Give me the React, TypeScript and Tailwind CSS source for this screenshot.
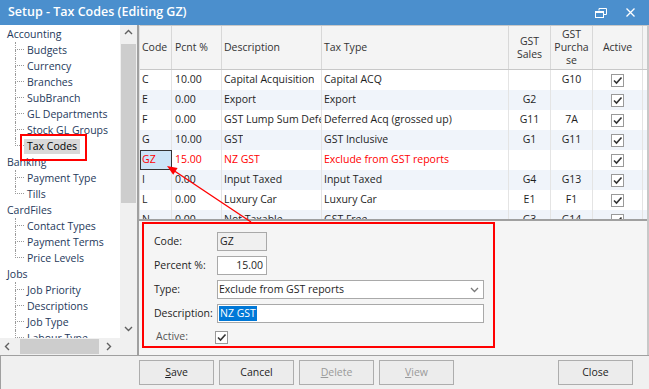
import React from "react";

const tree = [
  { name: "Accounting", children: ["Budgets", "Currency", "Branches", "SubBranch", "GL Departments", "Stock GL Groups", "Tax Codes"] },
  { name: "Banking", children: ["Payment Type", "Tills"] },
  { name: "CardFiles", children: ["Contact Types", "Payment Terms", "Price Levels"] },
  { name: "Jobs", children: ["Job Priority", "Descriptions", "Job Type", "Labour Type", "Status"] },
];

const rows = [
  ["C", "10.00", "Capital Acquisition", "Capital ACQ", "", "G10"],
  ["E", "0.00", "Export", "Export", "G2", ""],
  ["F", "0.00", "GST Lump Sum Deferred", "Deferred Acq (grossed up)", "G11", "7A"],
  ["G", "10.00", "GST", "GST Inclusive", "G1", "G11"],
  ["GZ", "15.00", "NZ GST", "Exclude from GST reports", "", ""],
  ["I", "0.00", "Input Taxed", "Input Taxed", "G4", "G13"],
  ["L", "0.00", "Luxury Car", "Luxury Car", "E1", "F1"],
  ["N", "0.00", "Not Taxable", "GST Free", "G3", "G14"],
];

function Check({ className = "" }: { className?: string }) {
  return (
    <div className={"w-[13px] h-[13px] border border-[#9a9a9a] bg-white flex items-center justify-center " + className}>
      <svg width="11" height="11" viewBox="0 0 11 11">
        <path d="M2 5.5 L4.5 8 L9.5 2.5" fill="none" stroke="#333" strokeWidth="1.6" />
      </svg>
    </div>
  );
}

function Chevron({ dir }: { dir: "up" | "down" | "left" | "right" }) {
  const d =
    dir === "up" ? "M1 5 L4.5 1.5 L8 5" : dir === "down" ? "M1 2 L4.5 5.5 L8 2" : dir === "left" ? "M5 1 L1.5 4.5 L5 8" : "M2 1 L5.5 4.5 L2 8";
  return (
    <svg width="9" height="9" viewBox="0 0 9 9">
      <path d={d} fill="none" stroke="#606060" strokeWidth="1.4" />
    </svg>
  );
}

function Tree() {
  return (
    <div className="pl-[7px] pt-[1px] text-[#1e395b] leading-[16px]">
      {tree.map((g) => (
        <div key={g.name}>
          <div className="h-[16px] flex items-center whitespace-nowrap">{g.name}</div>
          <div className="ml-[8px]">
            {g.children.map((c, i) => {
              const last = i === g.children.length - 1;
              const sel = c === "Tax Codes";
              return (
                <div key={c} className="h-[16px] flex items-stretch whitespace-nowrap">
                  <div className="w-[9px] flex flex-col shrink-0">
                    <div className="h-[8px] border-l border-b border-dotted border-[#9a9a9a]" />
                    {!last && <div className="flex-1 border-l border-dotted border-[#9a9a9a]" />}
                  </div>
                  <div className="flex items-center">
                    <span className={sel ? "bg-[#d9d9d9] text-black px-[3px] h-[15px] flex items-center" : "px-[3px]"}>{c}</span>
                  </div>
                </div>
              );
            })}
          </div>
        </div>
      ))}
    </div>
  );
}

const colW = ["w-[32px]", "w-[50px]", "w-[100px]", "w-[187px]", "w-[42px]", "w-[42px]", "w-[50px]"];

function Grid() {
  return (
    <div className="h-[194px] overflow-hidden bg-white border-l border-[#e0e0e0]">
      <div className="h-[45px] flex bg-[#f4f4f4] border-t border-b border-[#c8c8c8] text-[#333]">
        <div className={colW[0] + " border-r border-[#d8d8d8] flex items-center pl-[2px]"}>Code</div>
        <div className={colW[1] + " border-r border-[#d8d8d8] flex items-center pl-[3px]"}>Pcnt %</div>
        <div className={colW[2] + " border-r border-[#d8d8d8] flex items-center pl-[2px]"}>Description</div>
        <div className={colW[3] + " border-r border-[#d8d8d8] flex items-center pl-[2px]"}>Tax Type</div>
        <div className={colW[4] + " border-r border-[#d8d8d8] flex items-center justify-center text-center leading-[13px]"}>GST<br />Sales</div>
        <div className={colW[5] + " border-r border-[#d8d8d8] flex items-center justify-center text-center leading-[13px]"}>GST<br />Purcha<br />se</div>
        <div className={colW[6] + " border-r border-[#d8d8d8] flex items-center justify-center"}>Active</div>
        <div className="flex-1" />
      </div>
      {rows.map((r, i) => {
        const sel = r[0] === "GZ";
        const bg = i % 2 === 1 ? "bg-[#f0f4fa]" : "bg-white";
        const tc = sel ? "text-[#ff0000]" : "text-[#1e1e1e]";
        return (
          <div key={r[0]} className={"h-[20px] flex " + bg + " " + tc}>
            <div
              className={
                colW[0] +
                " flex items-center " +
                (sel ? "bg-[#cce4f7] border border-[#333333] pl-[1px]" : "border-r border-[#e4e4e4] pl-[2px]")
              }
            >
              {r[0]}
            </div>
            <div className={colW[1] + " border-r border-[#e4e4e4] flex items-center pl-[3px]"}>{r[1]}</div>
            <div className={colW[2] + " border-r border-[#e4e4e4] flex items-center pl-[2px] overflow-hidden"}>
              <span className="whitespace-nowrap overflow-hidden">{r[2]}</span>
            </div>
            <div className={colW[3] + " border-r border-[#e4e4e4] flex items-center pl-[2px] overflow-hidden"}>
              <span className="whitespace-nowrap overflow-hidden">{r[3]}</span>
            </div>
            <div className={colW[4] + " border-r border-[#e4e4e4] flex items-center justify-center"}>{r[4]}</div>
            <div className={colW[5] + " border-r border-[#e4e4e4] flex items-center justify-center"}>{r[5]}</div>
            <div className={colW[6] + " border-r border-[#e4e4e4] flex items-center justify-center"}>
              <Check />
            </div>
            <div className="flex-1" />
          </div>
        );
      })}
    </div>
  );
}

function Form() {
  return (
    <div className="flex-1 bg-[#f5f5f5] pl-[3px] pt-[1px]">
      <div className="w-[353px] h-[126px] border-2 border-[#ff0000] pl-[10px] pt-[8px] flex flex-col gap-[5px] text-[#1e1e1e]">
        <div className="h-[19px] flex items-center">
          <div className="w-[63px]">Code:</div>
          <div className="w-[50px] h-[19px] border border-[#a9a9a9] bg-[#f0f0f0] flex items-center pl-[2px]">GZ</div>
        </div>
        <div className="h-[19px] flex items-center">
          <div className="w-[63px]">Percent %:</div>
          <div className="w-[50px] h-[19px] border border-[#a9a9a9] bg-white flex items-center justify-end pr-[3px]">15.00</div>
        </div>
        <div className="h-[19px] flex items-center">
          <div className="w-[63px]">Type:</div>
          <div className="w-[267px] h-[19px] border border-[#a9a9a9] bg-white flex items-center pl-[1px] pr-[4px]">
            <span>Exclude from GST reports</span>
            <span className="ml-auto">
              <svg width="9" height="9" viewBox="0 0 9 9">
                <path d="M1 3 L4.5 6.5 L8 3" fill="none" stroke="#7a7a7a" strokeWidth="1.3" />
              </svg>
            </span>
          </div>
        </div>
        <div className="h-[19px] flex items-center">
          <div className="w-[63px]">Description:</div>
          <div className="w-[267px] h-[19px] border border-[#a9a9a9] bg-white flex items-center pl-[1px]">
            <span className="bg-[#0078d7] text-white px-[1px] leading-[15px]">NZ GST</span>
          </div>
        </div>
        <div className="h-[19px] flex items-center">
          <div className="w-[61px] pl-[2px] text-[#555]">Active:</div>
          <Check className="bg-[#f5f5f5]" />
        </div>
      </div>
    </div>
  );
}

function Btn({ children, disabled = false, ml = "" }: { children: React.ReactNode; disabled?: boolean; ml?: string }) {
  return (
    <div
      className={
        "w-[75px] h-[25px] border border-[#adadad] bg-[#ececec] flex items-center justify-center " +
        (disabled ? "text-[#9a9a9a] " : "text-[#1e1e1e] ") +
        ml
      }
    >
      {children}
    </div>
  );
}

export default function App() {
  return (
    <div className="relative w-[649px] h-[389px] overflow-hidden bg-[#f0f0f0] font-['Open_Sans',sans-serif] text-[10.5px] text-[#1e1e1e] flex flex-col">
      <div className="h-[25px] shrink-0 bg-[#4b8fcd] flex items-center pl-[8px] pr-[14px]">
        <span className="text-white font-semibold text-[12.5px] leading-none">Setup - Tax Codes (Editing GZ)</span>
        <div className="ml-auto flex items-center gap-[19px]">
          <svg width="12" height="10" viewBox="0 0 12 10">
            <path d="M4 2.5 V0.5 H11.5 V6.5 H9" fill="none" stroke="white" strokeWidth="1" />
            <rect x="0.5" y="3.5" width="8" height="6" fill="none" stroke="white" strokeWidth="1" />
            <line x1="0.5" y1="4.5" x2="8.5" y2="4.5" stroke="white" strokeWidth="1" />
          </svg>
          <svg width="9" height="9" viewBox="0 0 9 9">
            <path d="M0.5 0.5 L8.5 8.5 M8.5 0.5 L0.5 8.5" stroke="white" strokeWidth="1.3" />
          </svg>
        </div>
      </div>

      <div className="h-[330px] shrink-0 flex">
        <div className="w-[137px] flex flex-col bg-white">
          <div className="flex-1 flex min-h-0">
            <div className="flex-1 overflow-hidden">
              <Tree />
            </div>
            <div className="w-[17px] bg-[#f0f0f0] flex flex-col">
              <div className="h-[17px] flex items-center justify-center">
                <Chevron dir="up" />
              </div>
              <div className="mt-[2px] h-[159px] mx-[1px] bg-[#cdcdcd]" />
              <div className="flex-1" />
              <div className="h-[17px] flex items-center justify-center">
                <Chevron dir="down" />
              </div>
            </div>
          </div>
          <div className="h-[17px] flex bg-[#f0f0f0]">
            <div className="w-[120px] flex items-center">
              <div className="w-[17px] flex justify-center">
                <Chevron dir="left" />
              </div>
              <div className="ml-[3px] w-[79px] h-[15px] bg-[#cdcdcd]" />
              <div className="flex-1 flex justify-center">
                <Chevron dir="right" />
              </div>
            </div>
            <div className="flex-1" />
          </div>
        </div>
        <div className="w-[2px] bg-[#a0a0a0]" />
        <div className="flex-1 flex flex-col border-r-2 border-[#c8c8c8]">
          <Grid />
          <div className="h-[2px] bg-[#a0a0a0]" />
          <Form />
        </div>
      </div>

      <div className="flex-1 border-t border-l border-[#a0a0a0] flex items-center pl-[138px] pr-[16px] gap-[5px]">
        <Btn>
          <span><u>S</u>ave</span>
        </Btn>
        <Btn>Cancel</Btn>
        <Btn disabled>
          <span><u>D</u>elete</span>
        </Btn>
        <Btn disabled>
          <span><u>V</u>iew</span>
        </Btn>
        <Btn ml="ml-auto">Close</Btn>
      </div>

      <div className="absolute left-[20px] top-[134px] w-[67px] h-[27px] border-2 border-[#ff0000] pointer-events-none" />
      <svg className="absolute left-0 top-0 pointer-events-none" width="649" height="389" viewBox="0 0 649 389">
        <line x1="251" y1="222" x2="173" y2="170" stroke="#ff0000" strokeWidth="1.3" />
        <polygon points="167,166 177.6,168.1 173.2,174.8" fill="#ff0000" />
      </svg>
    </div>
  );
}
